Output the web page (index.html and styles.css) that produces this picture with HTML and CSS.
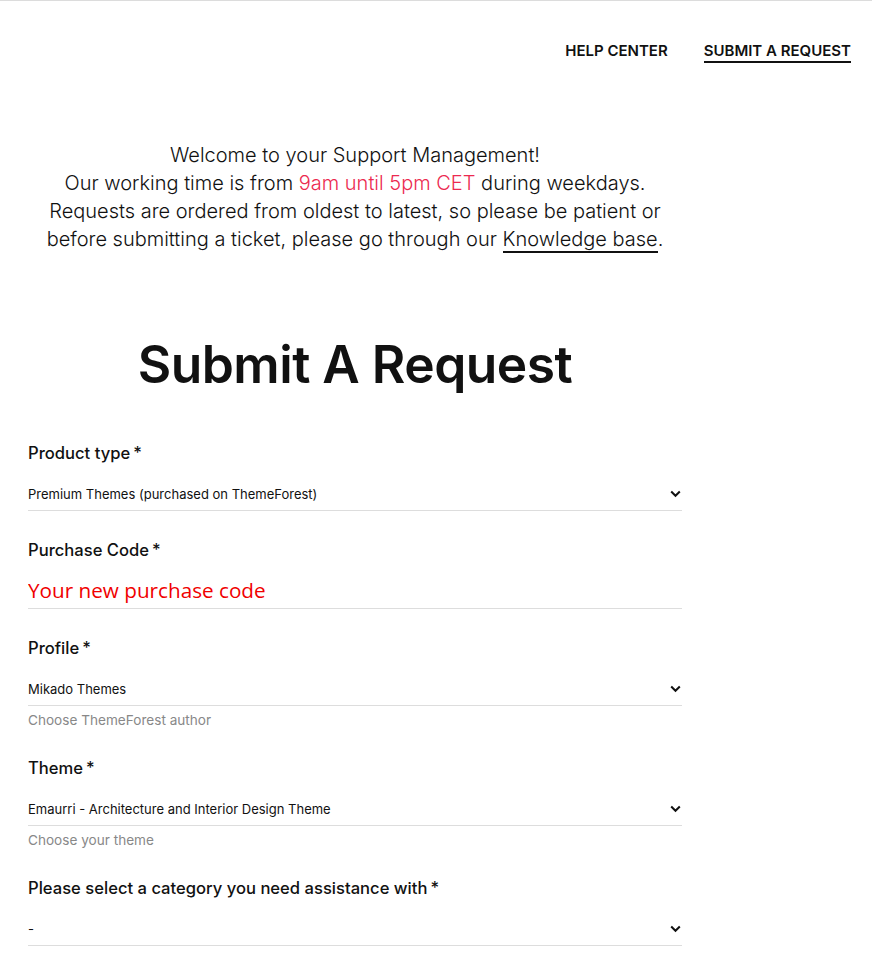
FILE: index.html
```html
<!DOCTYPE html>
<html>
<head>
    <meta charset="UTF-8">
    <title>Submit A Request</title>
    <link rel="stylesheet" href="styles.css">
</head>
<body>
    <!-- 상단 메뉴 -->
    <header class="top-nav">
        <a href="#" class="nav-link">HELP CENTER</a>
        <a href="#" class="nav-link active">SUBMIT A REQUEST</a>
    </header>

    <main class="content">
        <!-- 안내 문구 -->
        <div class="intro">
            Welcome to your Support Management!<br>
            Our working time is from <span class="hours">9am until 5pm CET</span> during weekdays.<br>
            Requests are ordered from oldest to latest, so please be patient or<br>
            before submitting a ticket, please go through our <a href="#" class="kb-link">Knowledge base</a>.
        </div>

        <h1 class="page-title">Submit A Request</h1>

        <!-- 요청 폼 -->
        <form class="request-form">
            <div class="field">
                <label>Product type<span class="req">*</span></label>
                <div class="select-row">
                    <span>Premium Themes (purchased on ThemeForest)</span>
                    <svg class="chevron" width="11" height="8" viewBox="0 0 11 8"><path d="M1.2 1.5 5.5 5.8 9.8 1.5" fill="none" stroke="#111" stroke-width="2"/></svg>
                </div>
            </div>

            <div class="field">
                <label>Purchase Code<span class="req">*</span></label>
                <input type="text" class="text-input" placeholder="Your new purchase code">
            </div>

            <div class="field">
                <label>Profile<span class="req">*</span></label>
                <div class="select-row">
                    <span>Mikado Themes</span>
                    <svg class="chevron" width="11" height="8" viewBox="0 0 11 8"><path d="M1.2 1.5 5.5 5.8 9.8 1.5" fill="none" stroke="#111" stroke-width="2"/></svg>
                </div>
                <div class="help">Choose ThemeForest author</div>
            </div>

            <div class="field">
                <label>Theme<span class="req">*</span></label>
                <div class="select-row">
                    <span>Emaurri - Architecture and Interior Design Theme</span>
                    <svg class="chevron" width="11" height="8" viewBox="0 0 11 8"><path d="M1.2 1.5 5.5 5.8 9.8 1.5" fill="none" stroke="#111" stroke-width="2"/></svg>
                </div>
                <div class="help">Choose your theme</div>
            </div>

            <div class="field">
                <label>Please select a category you need assistance with<span class="req">*</span></label>
                <div class="select-row">
                    <span>-</span>
                    <svg class="chevron" width="11" height="8" viewBox="0 0 11 8"><path d="M1.2 1.5 5.5 5.8 9.8 1.5" fill="none" stroke="#111" stroke-width="2"/></svg>
                </div>
            </div>
        </form>
    </main>
</body>
</html>
```

FILE: styles.css
```css
/* 전체 페이지 */
body {
    margin: 0;
    border-top: 1px solid #dcdcdc;
    font-family: Inter, "Noto Sans", sans-serif;
    color: #111;
    background: #fff;
}

/* 상단 메뉴 */
.top-nav {
    display: flex;
    justify-content: flex-end;
    gap: 36px;
    padding: 39px 21px 0 0;
    height: 39px;
}

.nav-link {
    font-size: 15px;
    font-weight: 600;
    color: #111;
    text-decoration: none;
    line-height: 21px;
    height: 21px;
}

.nav-link.active {
    border-bottom: 2px solid #111;
}

/* 본문 영역 */
.content {
    width: 654px;
    padding-left: 28px;
}

/* 안내 문구 */
.intro {
    margin-top: 62px;
    text-align: center;
    font-size: 20px;
    line-height: 28px;
    font-weight: 300;
}

.hours {
    color: #ec2a50;
}

.kb-link {
    color: #111;
    text-decoration: none;
    border-bottom: 2px solid #111;
}

/* 제목 */
.page-title {
    margin: 79px 0 0;
    text-align: center;
    font-size: 51.5px;
    line-height: 64px;
    font-weight: 600;
    letter-spacing: -0.5px;
}

/* 폼 */
.request-form {
    margin-top: 45px;
    display: flex;
    flex-direction: column;
    gap: 27px;
}

.field {
    display: flex;
    flex-direction: column;
}

.field label {
    font-size: 16.6px;
    font-weight: 500;
    line-height: 24px;
}

.req {
    margin-left: 3px;
}

.select-row {
    margin-top: 12px;
    height: 33px;
    border-bottom: 1px solid #ddd;
    display: flex;
    align-items: center;
    justify-content: space-between;
    font-size: 13px;
}

.chevron {
    margin-right: 1px;
}

.text-input {
    margin-top: 10px;
    height: 36px;
    border: none;
    border-bottom: 1px solid #ddd;
    padding: 0;
    font-family: "Open Sans", sans-serif;
    font-size: 20.7px;
    outline: none;
}

.text-input::placeholder {
    color: #f00000;
}

.help {
    margin-top: 6px;
    font-size: 13.6px;
    line-height: 17px;
    color: #888;
}
```
